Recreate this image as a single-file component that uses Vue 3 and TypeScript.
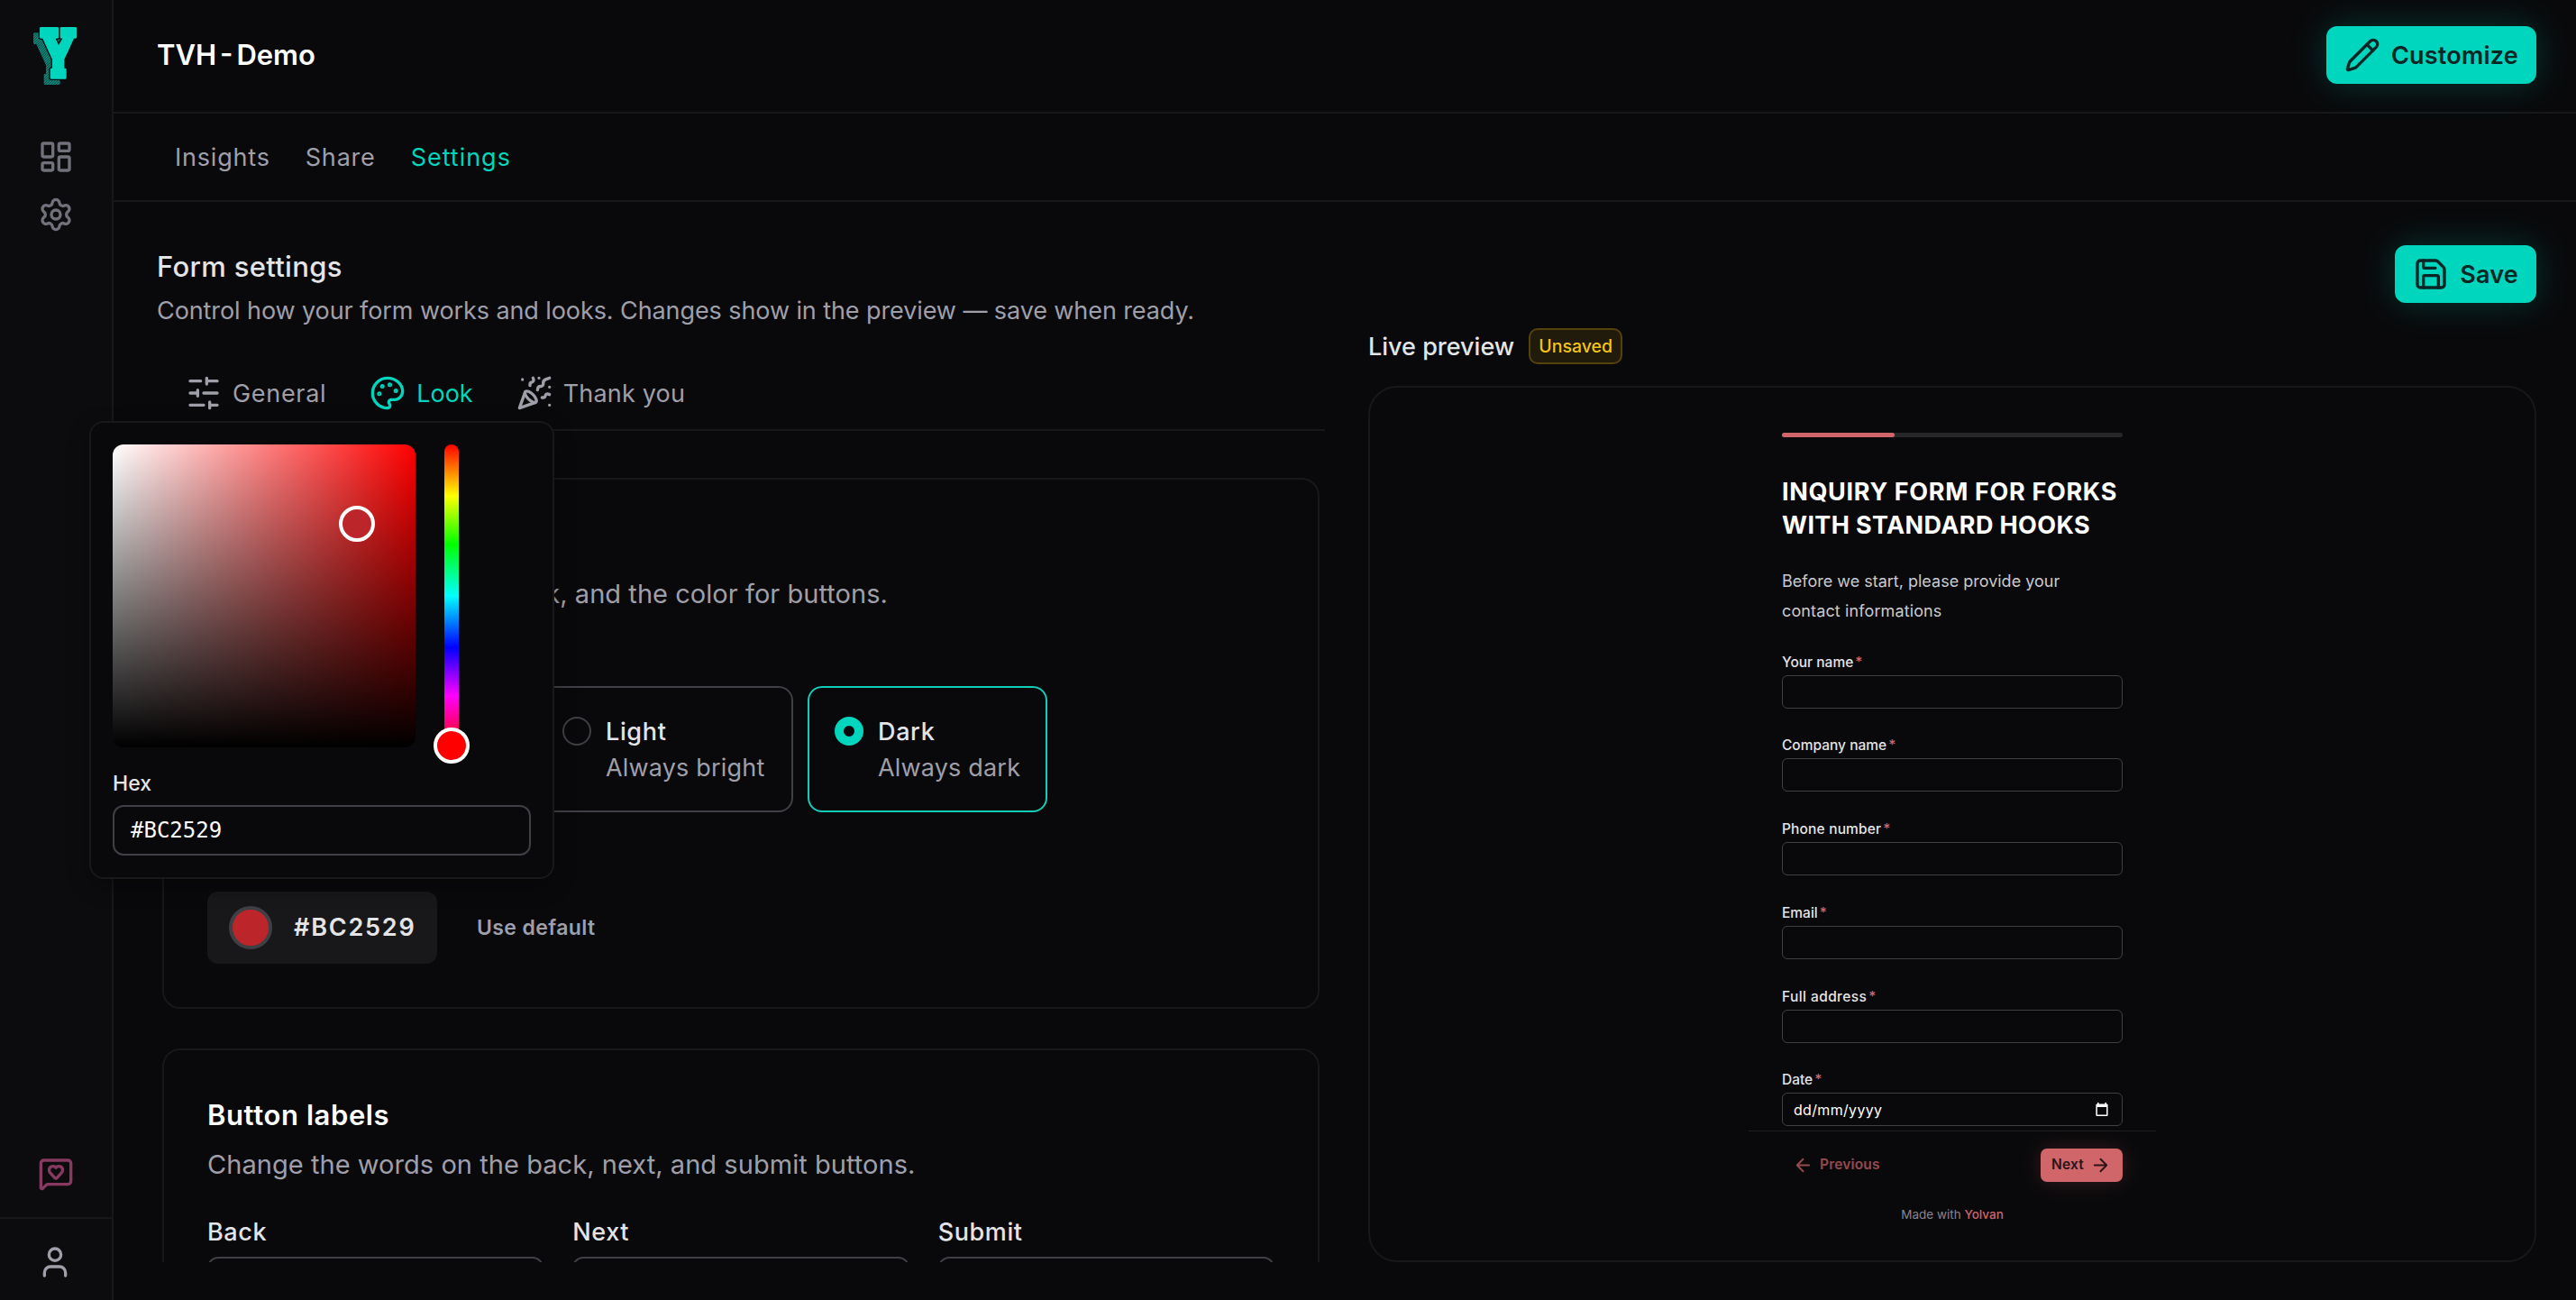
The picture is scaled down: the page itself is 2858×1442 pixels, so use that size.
<script setup lang="ts">
interface Option {
  name: string
  hint: string
  active?: boolean
}

const options: Option[] = [
  { name: 'Light', hint: 'Always bright' },
  { name: 'Dark', hint: 'Always dark', active: true },
]
const labels: string[] = ['Back', 'Next', 'Submit']
const fields: string[] = ['Your name', 'Company name', 'Phone number', 'Email', 'Full address', 'Date']
const hex = '#BC2529'
const progress = 33

const slug = (s: string): string => s.toLowerCase().replace(/ /g, '-')
</script>

<template>
  <div class="app">
    <aside class="sidebar">
      <svg class="logo" viewBox="0 0 192 252">
        <defs>
          <pattern id="hatch" width="6" height="6" patternUnits="userSpaceOnUse" patternTransform="rotate(45)">
            <rect width="6" height="6" fill="#0b3b37" />
            <rect width="3.4" height="6" fill="#0f9a8b" />
          </pattern>
          <path id="mark" d="M46 30H101q4 0 4 4V64q0 4-4 4H95L105 90 118 68H114q-4 0-4-4V34q0-4 4-4H161q4 0 4 4V64q0 4-4 4H156L124 138V167H127q4 0 4 4V199q0 4-4 4H81q-4 0-4-4V171q0-4 4-4H84V138L52 68H46q-4 0-4-4V34q0-4 4-4Z" />
        </defs>
        <use href="#mark" x="-21" y="19" fill="url(#hatch)" />
        <use href="#mark" fill="#00d5be" stroke="#0c0c0e" stroke-width="8" paint-order="stroke" />
      </svg>
      <nav class="side-nav">
        <svg class="icon" viewBox="0 0 24 24"><rect width="7" height="9" x="3" y="3" rx="1" /><rect width="7" height="5" x="14" y="3" rx="1" /><rect width="7" height="9" x="14" y="12" rx="1" /><rect width="7" height="5" x="3" y="16" rx="1" /></svg>
        <svg class="icon" viewBox="0 0 24 24"><path d="M9.671 4.136a2.34 2.34 0 0 1 4.659 0 2.34 2.34 0 0 0 3.319 1.915 2.34 2.34 0 0 1 2.33 4.033 2.34 2.34 0 0 0 0 3.831 2.34 2.34 0 0 1-2.33 4.033 2.34 2.34 0 0 0-3.319 1.915 2.34 2.34 0 0 1-4.659 0 2.34 2.34 0 0 0-3.32-1.915 2.34 2.34 0 0 1-2.33-4.033 2.34 2.34 0 0 0 0-3.831A2.34 2.34 0 0 1 6.35 6.051a2.34 2.34 0 0 0 3.319-1.915" /><circle cx="12" cy="12" r="3" /></svg>
      </nav>
      <svg class="icon feedback" viewBox="0 0 24 24"><path d="M22 17a2 2 0 0 1-2 2H6.828a2 2 0 0 0-1.414.586l-2.202 2.202A.71.71 0 0 1 2 21.286V5a2 2 0 0 1 2-2h16a2 2 0 0 1 2 2z" /><path d="M7.5 9.5c0 .687.265 1.383.697 1.844l3.009 3.264a1.14 1.14 0 0 0 .407.314 1 1 0 0 0 .783-.004 1.14 1.14 0 0 0 .398-.31l3.008-3.264A2.77 2.77 0 0 0 16.5 9.5 2.5 2.5 0 0 0 12 8a2.5 2.5 0 0 0-4.5 1.5" /></svg>
      <div class="account">
        <svg class="icon" viewBox="0 0 24 24"><path d="M19 21v-2a4 4 0 0 0-4-4H9a4 4 0 0 0-4 4v2" /><circle cx="12" cy="7" r="4" /></svg>
      </div>
    </aside>

    <main class="main">
      <header class="topbar">
        <h1 class="title">TVH - Demo</h1>
        <button class="primary">
          <svg class="icon" viewBox="0 0 24 24"><path d="M21.174 6.812a1 1 0 0 0-3.986-3.987L3.842 16.174a2 2 0 0 0-.5.83l-1.321 4.352a.5.5 0 0 0 .623.622l4.353-1.32a2 2 0 0 0 .83-.497z" /><path d="m15 5 4 4" /></svg>
          <span>Customize</span>
        </button>
      </header>
      <nav class="subnav">
        <a>Insights</a>
        <a>Share</a>
        <a class="settings">Settings</a>
      </nav>

      <div class="page">
        <div class="page-head">
          <div>
            <h2 class="page-title">Form settings</h2>
            <p class="page-sub">Control how your form works and looks. Changes show in the preview — save when ready.</p>
          </div>
          <button class="primary">
            <svg class="icon" viewBox="0 0 24 24"><path d="M15.2 3a2 2 0 0 1 1.4.6l3.8 3.8a2 2 0 0 1 .6 1.4V19a2 2 0 0 1-2 2H5a2 2 0 0 1-2-2V5a2 2 0 0 1 2-2z" /><path d="M17 21v-7a1 1 0 0 0-1-1H8a1 1 0 0 0-1 1v7" /><path d="M7 3v4a1 1 0 0 0 1 1h7" /></svg>
            <span>Save</span>
          </button>
        </div>

        <div class="columns">
          <section class="editor">
            <div class="tabs">
              <a class="tab general">
                <svg class="icon" viewBox="0 0 24 24"><path d="M21 4h-7M10 4H3M21 12h-9M8 12H3M21 20h-5M12 20H3M14 2v4M8 10v4M16 18v4" /></svg>
                <span>General</span>
              </a>
              <a class="tab look">
                <svg class="icon" viewBox="0 0 24 24"><circle cx="13.5" cy="6.5" r=".5" fill="currentColor" /><circle cx="17.5" cy="10.5" r=".5" fill="currentColor" /><circle cx="8.5" cy="7.5" r=".5" fill="currentColor" /><circle cx="6.5" cy="12.5" r=".5" fill="currentColor" /><path d="M12 2C6.5 2 2 6.5 2 12s4.5 10 10 10c.926 0 1.648-.746 1.648-1.688 0-.437-.18-.835-.437-1.125-.29-.289-.438-.652-.438-1.125a1.64 1.64 0 0 1 1.668-1.668h1.996c3.051 0 5.555-2.503 5.555-5.554C21.965 6.012 17.461 2 12 2z" /></svg>
                <span>Look</span>
              </a>
              <a class="tab thanks">
                <svg class="icon" viewBox="0 0 24 24"><path d="M5.8 11.3 2 22l10.7-3.79M4 3h.01M22 8h.01M15 2h.01M22 20h.01m0-18-2.24.75a2.9 2.9 0 0 0-1.96 3.12c.1.86-.57 1.63-1.45 1.63h-.38c-.86 0-1.6.6-1.76 1.44L14 10M22 13l-.82-.33c-.86-.34-1.82.2-1.98 1.11-.11.7-.72 1.22-1.43 1.22H17M11 2l.33.82c.34.86-.2 1.82-1.11 1.98C9.52 4.9 9 5.52 9 6.23V7" /><path d="M11 13c1.93 1.93 2.83 4.17 2 5-.83.83-3.07-.07-5-2-1.93-1.93-2.83-4.17-2-5 .83-.83 3.07.07 5 2Z" /></svg>
                <span>Thank you</span>
              </a>
            </div>

            <div class="scroll">
              <article class="card">
                <p class="card-desc theme-desc">look, and the color for buttons.</p>
                <div class="options">
                  <label v-for="o in options" :key="o.name" class="option" :class="[slug(o.name), { active: o.active }]">
                    <span class="radio"></span>
                    <span class="option-text">
                      <span class="option-name">{{ o.name }}</span>
                      <span class="option-hint">{{ o.hint }}</span>
                    </span>
                  </label>
                </div>
                <div class="color-row">
                  <button class="swatch-button"><span class="swatch"></span><span class="swatch-hex">{{ hex }}</span></button>
                  <button class="reset">Use default</button>
                </div>
              </article>

              <article class="card">
                <h3 class="card-title">Button labels</h3>
                <p class="card-desc">Change the words on the back, next, and submit buttons.</p>
                <div class="label-grid">
                  <label v-for="l in labels" :key="l" class="label-field">
                    <span>{{ l }}</span>
                    <span class="input"></span>
                  </label>
                </div>
              </article>
            </div>
          </section>

          <section class="preview">
            <div class="preview-head">
              <span class="preview-title">Live preview</span>
              <span class="badge">Unsaved</span>
            </div>
            <div class="panel">
              <div class="form">
                <div class="form-body">
                  <div class="progress"><div class="bar" :style="{ width: progress + '%' }"></div></div>
                  <h3 class="form-title">
                    <span class="wide">INQUIRY FORM FOR FORKS</span><br />
                    <span>WITH STANDARD HOOKS</span>
                  </h3>
                  <p class="form-intro">Before we start, please provide your<br /><span class="intro-end">contact informations</span></p>
                  <div v-for="f in fields" :key="f" class="field">
                    <span class="field-label" :class="slug(f)">{{ f }}<i>*</i></span>
                    <span class="field-input">
                      <template v-if="f === 'Date'">
                        <span>dd/mm/yyyy</span>
                        <svg class="calendar" viewBox="0 0 14 15"><path fill-rule="evenodd" d="M2 0h1.6v1.4h6.8V0H12v1.4h.6q1 0 1 1V14q0 1-1 1H1.4q-1 0-1-1V2.4q0-1 1-1H2zM1.9 5v8.500h10.200V5z" /></svg>
                      </template>
                    </span>
                  </div>
                </div>
                <div class="form-nav">
                  <span class="prev"><svg class="arrow" viewBox="0 0 24 24"><path d="m12 19-7-7 7-7M19 12H5" /></svg><span>Previous</span></span>
                  <span class="next"><span>Next</span><svg class="arrow" viewBox="0 0 24 24"><path d="M5 12h14M12 5l7 7-7 7" /></svg></span>
                </div>
                <p class="made">Made with <b>Yolvan</b></p>
              </div>
            </div>
          </section>
        </div>
      </div>
    </main>

    <div class="popover">
      <div class="pickers">
        <div class="sv"><span class="thumb sv-thumb"></span></div>
        <div class="hue"><span class="thumb hue-thumb"></span></div>
      </div>
      <span class="hex-label">Hex</span>
      <div class="hex-input">{{ hex }}</div>
    </div>
  </div>
</template>

<style>
html,
body {
  background: #09090b;
}
</style>

<style scoped>
* { box-sizing: border-box; }
h1, h2, h3, p { margin: 0; font-weight: inherit; }
button { border: 0; background: none; font: inherit; padding: 0; }
.app {
  position: relative;
  display: flex;
  width: 2858px;
  height: 1442px;
  overflow: hidden;
  background: #09090b;
  color: #e4e4e7;
  font-family: Inter, "Liberation Sans", sans-serif;
  font-size: 27px;
  line-height: 40px;
  white-space: nowrap;
}
.icon { width: 40px; height: 40px; flex: none; display: block; fill: none; stroke: currentColor; stroke-width: 2; stroke-linecap: round; stroke-linejoin: round; }

.sidebar { width: 126px; flex: none; display: flex; flex-direction: column; border-right: 2px solid #18181b; background: #0c0c0e; color: #71717b; }
.logo { width: 64px; height: 84px; margin: 20px 0 0 30px; flex: none; }
.side-nav { display: flex; flex-direction: column; gap: 24px; padding: 50px 0 0 42px; flex: 1; }
.feedback { margin: 0 0 28px 42px; color: #87395f; }
.account { height: 92px; padding: 28px 0 0 41px; border-top: 2px solid #18181b; color: #9f9fa9; }

.main { flex: 1; display: flex; flex-direction: column; min-height: 0; }
.topbar { flex: none; height: 126px; display: flex; align-items: center; justify-content: space-between; padding: 0 44px 2px 48px; border-bottom: 2px solid #18181b; }
.title { font-size: 31px; font-weight: 600; word-spacing: -3.9px; color: #fff; }
.primary { display: flex; align-items: center; gap: 12px; height: 64px; padding: 0 20px; border-radius: 12px; background: #00d5be; color: #0a2624; font-weight: 600; letter-spacing: 0.22px; box-shadow: 0 0 40px rgba(0, 213, 190, 0.22); }
.primary span { padding-top: 1px; }
.subnav { flex: none; height: 98px; display: flex; align-items: center; gap: 39px; padding: 1px 0 0 68px; border-bottom: 2px solid #18181b; color: #9f9fa9; letter-spacing: 0.8px; }
.settings { color: #00d5be; letter-spacing: 0.98px; }

.page { flex: 1; min-height: 0; padding: 48px 44px 42px 48px; display: flex; flex-direction: column; }
.page-head { flex: none; height: 92px; display: flex; justify-content: space-between; align-items: flex-start; }
.page-title { font-size: 31px; font-weight: 500; line-height: 48px; letter-spacing: 0.32px; }
.page-sub { margin-top: 3px; line-height: 44px; letter-spacing: -0.09px; color: #9f9fa9; }
.columns { flex: 1; display: flex; gap: 48px; min-height: 0; }
.editor, .preview { width: 1296px; display: flex; flex-direction: column; min-height: 0; }
.editor { padding-top: 32px; }
.tabs { height: 82px; flex: none; display: flex; align-items: center; gap: 48px; padding-left: 32px; border-bottom: 2px solid #18181b; color: #9f9fa9; }
.tab { display: flex; align-items: center; gap: 12px; }
.tab span { padding-top: 1px; }
.tab.general { letter-spacing: 0.68px; }
.tab.look { color: #00d5be; }
.tab.thanks { letter-spacing: 0.18px; }

.scroll { flex: 1; min-height: 0; overflow: hidden; padding: 52px 6px 0; }
.card { padding: 48px; border: 2px solid #18181b; border-radius: 20px; }
.card + .card { margin-top: 44px; }
.card-title { font-size: 31px; line-height: 47px; font-weight: 600; letter-spacing: 0.6px; color: #fff; margin-bottom: 10px; }
.card-desc { font-size: 29px; line-height: 44px; letter-spacing: 0.05px; color: #9f9fa9; }
.theme-desc { margin-top: 57px; width: 755px; text-align: right; }
.options { display: flex; gap: 16px; margin: 80px 0 0 364px; }
.option { display: flex; gap: 16px; height: 140px; padding: 28px; border: 2px solid #3f3f46; border-radius: 16px; }
.option.light { width: 286px; }
.option.dark { width: 266px; }
.option.active { border-color: #14cdb9; }
.radio { width: 32px; height: 32px; flex: none; margin-top: 4px; border: 2px solid #3f3f46; border-radius: 50%; }
.active .radio { border: 10px solid #00d5be; }
.option-text { display: flex; flex-direction: column; padding-top: 1px; }
.option-name { font-weight: 500; letter-spacing: 0.65px; }
.option-hint { color: #9f9fa9; letter-spacing: 0.18px; }
.color-row { display: flex; align-items: center; gap: 44px; margin-top: 88px; }
.swatch-button { display: flex; align-items: center; width: 255px; height: 80px; padding-left: 24px; gap: 24px; border-radius: 12px; background: #18181b; color: #e4e4e7; font-weight: 600; letter-spacing: 1.8px; }
.swatch { width: 48px; height: 48px; border: 4px solid #3f3f46; border-radius: 50%; background: #bc2529; }
.reset { font-size: 23px; font-weight: 600; letter-spacing: 0.39px; color: #9f9fa9; }
.label-grid { display: grid; grid-template-columns: repeat(3, 1fr); gap: 32px; margin-top: 33px; }
.label-field { display: flex; flex-direction: column; gap: 7px; font-weight: 500; letter-spacing: 0.6px; }
.input { height: 72px; border: 2px solid #3f3f46; border-radius: 12px; }

.preview-head { flex: none; display: flex; align-items: center; gap: 16px; height: 40px; margin-bottom: 24px; }
.preview-title { padding-top: 1px; font-weight: 500; }
.badge { width: 104px; height: 40px; line-height: 36px; text-align: center; border: 2px solid #54430c; border-radius: 10px; background: #211b0b; color: #f4c416; font-size: 19.5px; font-weight: 500; }
.panel { flex: 1; min-height: 0; border: 2px solid #18181b; border-radius: 32px; display: flex; justify-content: center; }
.form { width: 452px; padding-top: 50px; }
.form-body { height: 774px; padding: 0 37px; overflow: hidden; }
.progress { height: 5px; border-radius: 3px; background: #27272a; }
.bar { height: 5px; border-radius: 3px; background: #d0656a; }
.form-title { margin-top: 41.5px; font-size: 27px; line-height: 37px; font-weight: 700; letter-spacing: 0.37px; color: #fff; }
.form-title .wide { letter-spacing: 0.66px; }
.form-intro { margin-top: 27px; margin-bottom: 27px; font-size: 18px; line-height: 33px; color: #c9c9ce; }
.intro-end { letter-spacing: 0.12px; }
.field { height: 92.75px; }
.field-label { display: block; height: 28px; line-height: 27px; font-size: 15.5px; font-weight: 500; color: #e4e4e7; }
.field-label.phone-number { letter-spacing: 0.16px; }
.field-label.full-address { letter-spacing: 0.41px; }
.field-label i { margin-left: 2px; font-style: normal; color: #d0656a; }
.field-input { display: flex; align-items: center; justify-content: space-between; height: 37px; padding: 0 15px 0 12px; border: 1px solid #3f3f46; border-radius: 6px; font-size: 16px; letter-spacing: 0.32px; color: #fff; }
.calendar { width: 14px; height: 15px; fill: #fff; }
.form-nav { display: flex; align-items: center; justify-content: space-between; padding: 17px 37px 0; border-top: 1px solid #1f1f22; font-size: 15.5px; font-weight: 600; letter-spacing: 0.18px; }
.arrow { width: 23px; height: 23px; flex: none; fill: none; stroke: currentColor; stroke-width: 2; stroke-linecap: round; stroke-linejoin: round; }
.prev { display: flex; align-items: center; gap: 7px; padding-left: 12px; color: #964a4e; }
.next { display: flex; align-items: center; gap: 7px; width: 91px; height: 37px; padding-left: 12px; border-radius: 7px; background: #d0656a; color: #2a1416; box-shadow: 0 0 24px rgba(208, 101, 106, 0.22); }
.made { margin-top: 15px; text-align: center; font-size: 13.5px; color: #85858d; }
.made b { font-weight: 500; color: #d0656a; }

.popover { position: absolute; left: 99px; top: 467px; width: 516px; height: 508px; padding: 24px; border: 2px solid #18181b; border-radius: 16px; background: #09090b; box-shadow: 0 8px 24px rgba(0, 0, 0, 0.3); }
.pickers { display: flex; gap: 32px; }
.sv { position: relative; width: 336px; height: 336px; border-radius: 12px; background: linear-gradient(to top, #000, transparent), linear-gradient(to right, #fff, #f00); }
.hue { position: relative; width: 16px; height: 336px; border-radius: 8px; background: linear-gradient(to bottom, #f00 0%, #ff0 17%, #0f0 33%, #0ff 50%, #00f 67%, #f0f 83%, #f00 100%); }
.thumb { position: absolute; width: 40px; height: 40px; border: 4px solid #fff; border-radius: 50%; }
.sv-thumb { left: 251px; top: 68px; background: #bc2529; }
.hue-thumb { left: -12px; top: 314px; background: #f00; }
.hex-label { display: block; margin: 24px 0 8px; font-size: 23px; line-height: 32px; font-weight: 500; }
.hex-input { height: 56px; padding-left: 18px; border: 2px solid #3f3f46; border-radius: 12px; line-height: 52px; font-family: "DejaVu Sans Mono", monospace; font-size: 24px; color: #fff; }
</style>
